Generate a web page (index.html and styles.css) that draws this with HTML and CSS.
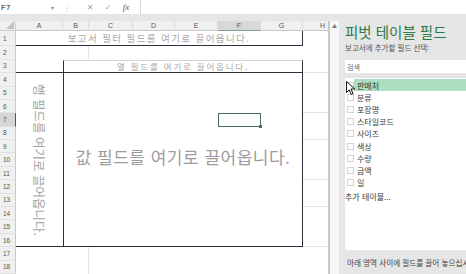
FILE: index.html
```html
<!DOCTYPE html>
<html lang="ko">

<head>
  <meta charset="UTF-8">
  <meta name="viewport" content="width=device-width, initial-scale=1.0">
  <title>피벗 테이블 필드</title>
  <link rel="stylesheet" href="styles.css">
</head>

<body>
  <div class="formula-bar">
    <div class="name-box">F7<span class="arrow">▾</span></div>
    <div class="fx-tools">
      <span class="dots">⋮</span>
      <span class="tool cancel">✕</span>
      <span class="tool">✓</span>
      <span class="tool fx">fx</span>
    </div>
    <div class="formula-input"></div>
  </div>

  <div class="workspace">
    <div class="sheet-side">
      <div class="band"></div>
      <div class="sheet-row">
        <div class="sheet">
          <div class="corner"><span class="corner-mark"></span></div>
          <div class="ch">A</div>
          <div class="ch">B</div>
          <div class="ch">C</div>
          <div class="ch">D</div>
          <div class="ch">E</div>
          <div class="ch selected">F</div>
          <div class="ch">G</div>
          <div class="ch last">H</div>

          <!-- pivot drop zones -->
          <div class="filter-zone">보고서 필터 필드를 여기로 끌어옵니다.</div>
          <div class="blank-b row-3"></div>
          <div class="zone-a"></div>
          <div class="col-zone">열 필드를 여기로 끌어옵니다.</div>
          <div class="row-zone"><span class="vtext">행 필드를 여기로 끌어옵니다.</span></div>
          <div class="data-zone">값 필드를 여기로 끌어옵니다.</div>
          <div class="sel-cell"></div>
          <div class="blank-b row-18"></div>
          <div class="blank-b row-19"></div>

          <div class="h-cell row-4"></div>
          <div class="h-cell row-7"></div>
          <div class="h-cell row-9"></div>
          <div class="h-cell row-12"></div>
          <div class="h-cell row-14"></div>
          <div class="h-cell row-17"></div>

          <div class="rh">1</div>
          <div class="rh">2</div>
          <div class="rh">3</div>
          <div class="rh">4</div>
          <div class="rh">5</div>
          <div class="rh">6</div>
          <div class="rh selected">7</div>
          <div class="rh">8</div>
          <div class="rh">9</div>
          <div class="rh">10</div>
          <div class="rh">11</div>
          <div class="rh">12</div>
          <div class="rh">13</div>
          <div class="rh">14</div>
          <div class="rh">15</div>
          <div class="rh">16</div>
          <div class="rh">17</div>
          <div class="rh">18</div>
        </div>
        <div class="vscroll"><span class="up">▲</span></div>
      </div>
    </div>

    <div class="panel">
      <div class="panel-title">피벗 테이블 필드</div>
      <div class="panel-sub">보고서에 추가할 필드 선택:</div>
      <div class="search">검색</div>
      <div class="field-list">
        <div class="field active"><span class="check"></span><span class="name">판매처</span></div>
        <div class="field"><span class="check"></span><span class="name">분류</span></div>
        <div class="field"><span class="check"></span><span class="name">포장명</span></div>
        <div class="field"><span class="check"></span><span class="name">스타일코드</span></div>
        <div class="field"><span class="check"></span><span class="name">사이즈</span></div>
        <div class="field"><span class="check"></span><span class="name">색상</span></div>
        <div class="field"><span class="check"></span><span class="name">수량</span></div>
        <div class="field"><span class="check"></span><span class="name">금액</span></div>
        <div class="field"><span class="check"></span><span class="name">일</span></div>
        <div class="more">추가 테이블...</div>
        <svg class="cursor" width="10" height="15" viewBox="0 0 10 15">
          <path d="M0.5 0.5 L0.5 11.5 L3.2 8.8 L5.2 13.5 L7 12.7 L5 8 L8.8 8 Z" fill="#fff" stroke="#111" stroke-width="1" stroke-linejoin="round" />
        </svg>
      </div>
      <div class="panel-foot">아래 영역 사이에 필드를 끌어 놓으십시오:</div>
    </div>
  </div>
</body>

</html>
```

FILE: styles.css
```css
* {
  box-sizing: border-box;
}

body {
  margin: 0;
  width: 466px;
  height: 274px;
  overflow: hidden;
  background: #fff;
  font-family: "Noto Sans CJK KR", "Noto Sans", sans-serif;
  color: #333;
}

/* formula bar */
.formula-bar {
  height: 14px;
  display: flex;
  background: #fff;
}

.name-box {
  width: 58px;
  display: flex;
  align-items: center;
  justify-content: space-between;
  padding: 0 4px 0 1px;
  font-family: "Liberation Sans", sans-serif;
  font-size: 8px;
  color: #222;
}

.name-box .arrow {
  font-size: 6px;
  color: #888;
}

.fx-tools {
  width: 83px;
  display: flex;
  align-items: center;
  border-right: 1px solid #dadada;
}

.dots {
  width: 18px;
  text-align: center;
  font-size: 8px;
  color: #c4c4c4;
}

.tool {
  width: 18px;
  text-align: center;
  font-family: "DejaVu Sans", sans-serif;
  font-size: 8px;
  color: #a8a8a8;
}

.tool.cancel {
  margin-left: 5px;
}

.tool.fx {
  font-family: "Liberation Serif", serif;
  font-style: italic;
  font-size: 9px;
  color: #555;
}

.formula-input {
  flex: 1;
}

/* workspace */
.workspace {
  display: flex;
  height: 260px;
}

.sheet-side {
  width: 339px;
  display: flex;
  flex-direction: column;
}

.band {
  height: 8px;
  background: #e6e6e6;
}

.sheet-row {
  flex: 1;
  display: flex;
}

.sheet {
  width: 328px;
  display: grid;
  grid-template-columns: 16px 47px 26px 44px 42px 43px 43px 42px 25px;
  grid-template-rows: 10px 15px repeat(17, 13.4px);
  background: #fff;
}

.corner {
  grid-row: 1;
  grid-column: 1;
  display: flex;
  align-items: flex-end;
  justify-content: flex-end;
  padding: 0 1px 1px 0;
  background: #f0f0f0;
  border-right: 1px solid #d0d0d0;
  border-bottom: 1px solid #c8c8c8;
}

.corner-mark {
  width: 0;
  height: 0;
  border-left: 8px solid transparent;
  border-bottom: 8px solid #c2c2c2;
}

.ch {
  grid-row: 1;
  display: flex;
  align-items: center;
  justify-content: center;
  background: #f0f0f0;
  border-right: 1px solid #dcdcdc;
  border-bottom: 1px solid #c8c8c8;
  font-family: "Liberation Sans", sans-serif;
  font-size: 7px;
  color: #555;
}

.ch.selected {
  background: #d8d8d8;
  border-bottom: 1px solid #7fa08a;
}

.ch.last {
  justify-content: flex-end;
  padding-right: 3px;
  border-right: none;
}

.rh {
  grid-column: 1;
  display: flex;
  align-items: center;
  padding-left: 3px;
  background: #f0f0f0;
  border-right: 1px solid #c8c8c8;
  border-bottom: 1px solid #e2e2e2;
  font-family: "Liberation Sans", sans-serif;
  font-size: 6.5px;
  color: #555;
}

.rh.selected {
  background: #d6d6d6;
  border-right: 1px solid #217346;
}

/* pivot zones */
.filter-zone {
  grid-column: 2 / 9;
  grid-row: 2;
  display: flex;
  align-items: center;
  justify-content: center;
  border-bottom: 1px solid #2e2e3c;
  border-right: 1px solid #2e2e3c;
  font-size: 9.5px;
  letter-spacing: 1.4px;
  color: #a8a8a8;
}

.blank-b {
  grid-column: 3;
  border-right: 1px solid #e4e4e4;
}

.row-3 { grid-row: 3; }
.row-4 { grid-row: 4; }
.row-7 { grid-row: 7; }
.row-9 { grid-row: 9; }
.row-12 { grid-row: 12; }
.row-14 { grid-row: 14; }
.row-17 { grid-row: 17; }
.row-18 { grid-row: 18; }
.row-19 { grid-row: 19; }

.zone-a {
  grid-column: 2;
  grid-row: 4;
  border-bottom: 1px solid #2e2e3c;
}

.col-zone {
  grid-column: 3 / 9;
  grid-row: 4;
  display: flex;
  align-items: center;
  justify-content: center;
  border-top: 1px solid #d4d4d4;
  border-left: 1px solid #2e2e3c;
  border-right: 1px solid #2e2e3c;
  border-bottom: 1px solid #2e2e3c;
  font-size: 8.5px;
  letter-spacing: 1.8px;
  color: #a8a8a8;
}

.row-zone {
  grid-column: 2;
  grid-row: 5 / 18;
  display: flex;
  align-items: center;
  justify-content: center;
  border-bottom: 1px solid #2e2e3c;
}

.vtext {
  writing-mode: vertical-rl;
  text-orientation: sideways;
  font-size: 12.5px;
  color: #a4a4a4;
  white-space: nowrap;
}

.data-zone {
  grid-column: 3 / 9;
  grid-row: 5 / 18;
  display: flex;
  align-items: center;
  justify-content: center;
  padding-bottom: 6px;
  border-left: 1px solid #2e2e3c;
  border-right: 1px solid #2e2e3c;
  border-bottom: 1px solid #2e2e3c;
  font-size: 17px;
  letter-spacing: 0.5px;
  color: #9c9c9c;
  white-space: nowrap;
}

.sel-cell {
  grid-column: 7;
  grid-row: 8;
  position: relative;
  z-index: 1;
  border: 1px solid #4a6b56;
}

.sel-cell::after {
  content: "";
  position: absolute;
  right: -2px;
  bottom: -2px;
  width: 3px;
  height: 3px;
  background: #4a6b56;
}

.h-cell {
  grid-column: 9;
  border-bottom: 1px solid #e2e2e2;
}

/* scrollbar */
.vscroll {
  width: 11px;
  background: #f7f7f7;
  border-left: 2px solid #c9c9c9;
  display: flex;
  justify-content: center;
}

.vscroll .up {
  font-size: 5px;
  line-height: 10px;
  color: #777;
}

/* field panel */
.panel {
  width: 127px;
  display: flex;
  flex-direction: column;
  padding: 8px 0 0 6px;
  background: #e6e6e6;
  overflow: hidden;
}

.panel-title {
  font-size: 14.5px;
  line-height: 20px;
  color: #2b7a4b;
  white-space: nowrap;
}

.panel-sub {
  margin-top: 1px;
  font-size: 7.5px;
  line-height: 10px;
  color: #555;
  white-space: nowrap;
}

.search {
  margin-top: 7px;
  height: 13px;
  display: flex;
  align-items: center;
  padding-left: 2px;
  background: #fff;
  font-size: 7px;
  color: #666;
}

.field-list {
  position: relative;
  margin-top: 5px;
  height: 172px;
  padding-top: 1px;
  background: #fff;
}

.field {
  height: 12.2px;
  display: flex;
  align-items: center;
  font-size: 8px;
  color: #3a3a3a;
}

.check {
  width: 7px;
  height: 7px;
  margin-left: 2px;
  border: 1px solid #d2d2d2;
  background: #fff;
}

.field .name {
  flex: 1;
  align-self: stretch;
  display: flex;
  align-items: center;
  padding-left: 3px;
}

.field.active .name {
  background: #abdfbf;
}

.more {
  margin-top: 2px;
  font-size: 8px;
  color: #3a3a3a;
}

.cursor {
  position: absolute;
  left: 1px;
  top: 3px;
}

.panel-foot {
  flex: 1;
  display: flex;
  align-items: center;
  padding-left: 2px;
  font-size: 7.6px;
  color: #444;
  white-space: nowrap;
}
```
